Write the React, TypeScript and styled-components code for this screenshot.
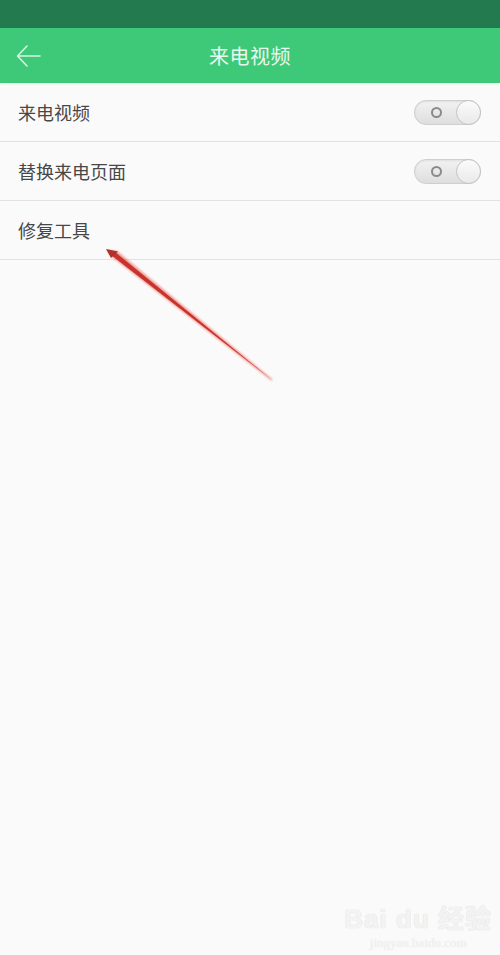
import React from "react";
import styled, { createGlobalStyle } from "styled-components";

const Global = createGlobalStyle`
  html, body {
    margin: 0;
    padding: 0;
    background: #fafafa;
  }
  body {
    font-family: "Noto Sans CJK SC", "Noto Sans", sans-serif;
  }
`;

const Page = styled.div`
  position: relative;
  width: 500px;
  height: 955px;
  background: #fafafa;
  overflow: hidden;
`;

const StatusBar = styled.div`
  height: 28px;
  background: #237a4f;
`;

const Toolbar = styled.div`
  position: relative;
  height: 55px;
  background: #3dc978;
  display: flex;
  align-items: center;
  justify-content: center;
  box-shadow: 0 1px 2px rgba(0, 0, 0, 0.08);
`;

const BackButton = styled.div`
  position: absolute;
  left: 16px;
  top: 16px;
  width: 26px;
  height: 24px;
  display: flex;
  align-items: center;
`;

const Title = styled.div`
  color: #e8f8ee;
  font-size: 20px;
  letter-spacing: 0.5px;
`;

const List = styled.div`
  display: flex;
  flex-direction: column;
`;

const Row = styled.div`
  height: 58px;
  display: flex;
  align-items: center;
  justify-content: space-between;
  padding: 0 19px 0 18px;
  border-bottom: 1px solid #e2e2e2;
`;

const Label = styled.div`
  color: #474747;
  font-size: 18px;
`;

const Toggle = styled.div`
  position: relative;
  width: 65px;
  height: 23px;
  border-radius: 12px;
  background: linear-gradient(#f2f2f2, #dedede);
  border: 1px solid #cfcfcf;
  box-shadow: inset 0 1px 2px rgba(0, 0, 0, 0.08);
`;

const ToggleRing = styled.div`
  position: absolute;
  left: 16px;
  top: 6px;
  width: 7px;
  height: 7px;
  border-radius: 50%;
  border: 2px solid #8a8a8a;
`;

const Knob = styled.div`
  position: absolute;
  right: -1px;
  top: -1px;
  width: 25px;
  height: 25px;
  border-radius: 50%;
  background: linear-gradient(#fbfbfb, #e9e9e9);
  border: 1px solid #c4c4c4;
  box-sizing: border-box;
`;

const Pointer = styled.svg`
  position: absolute;
  left: 0;
  top: 0;
  pointer-events: none;
`;

const Watermark = styled.div`
  position: absolute;
  right: 8px;
  bottom: 4px;
  display: flex;
  flex-direction: column;
  align-items: center;
  color: #f3f3f3;
  font-family: "Liberation Sans", "Noto Sans CJK SC", sans-serif;
`;

const MarkTop = styled.div`
  font-size: 26px;
  font-weight: bold;
  letter-spacing: 1px;
  text-shadow: 0 0 1px #e2e2e2, 0 0 1px #e2e2e2;
`;

const MarkUrl = styled.div`
  font-size: 13px;
  font-family: "Liberation Serif", serif;
  text-shadow: 0 0 1px #e2e2e2;
`;

const Switch: React.FC = () => (
  <Toggle>
    <ToggleRing />
    <Knob />
  </Toggle>
);

const App: React.FC = () => {
  const rows = [
    { label: "来电视频", toggle: true },
    { label: "替换来电页面", toggle: true },
    { label: "修复工具", toggle: false },
  ];
  return (
    <Page>
      <Global />
      <StatusBar />
      <Toolbar>
        <BackButton>
          <svg width="26" height="24" viewBox="0 0 26 24" fill="none">
            <path
              d="M24 12H2M11 2L1.5 12L11 22"
              stroke="#d8f5e3"
              strokeWidth="1.6"
              strokeLinecap="round"
              strokeLinejoin="round"
            />
          </svg>
        </BackButton>
        <Title>来电视频</Title>
      </Toolbar>
      <List>
        {rows.map((r) => (
          <Row key={r.label}>
            <Label>{r.label}</Label>
            {r.toggle && <Switch />}
          </Row>
        ))}
      </List>
      <Pointer width="500" height="955" viewBox="0 0 500 955">
        <defs>
          <filter id="blur" x="-10%" y="-10%" width="120%" height="120%">
            <feGaussianBlur stdDeviation="1" />
          </filter>
        </defs>
        <polygon
          points="272,381 112,257 107,250 117,251 272,379"
          fill="#e8463c"
          filter="url(#blur)"
          opacity="0.55"
        />
        <polygon
          points="272,380 111,255 108,250 115,252"
          fill="#c8332b"
        />
        <polygon points="106,249 118,251.5 111,258" fill="#b0302a" />
      </Pointer>
      <Watermark>
        <MarkTop>Bai du 经验</MarkTop>
        <MarkUrl>jingyan.baidu.com</MarkUrl>
      </Watermark>
    </Page>
  );
};

export default App;
